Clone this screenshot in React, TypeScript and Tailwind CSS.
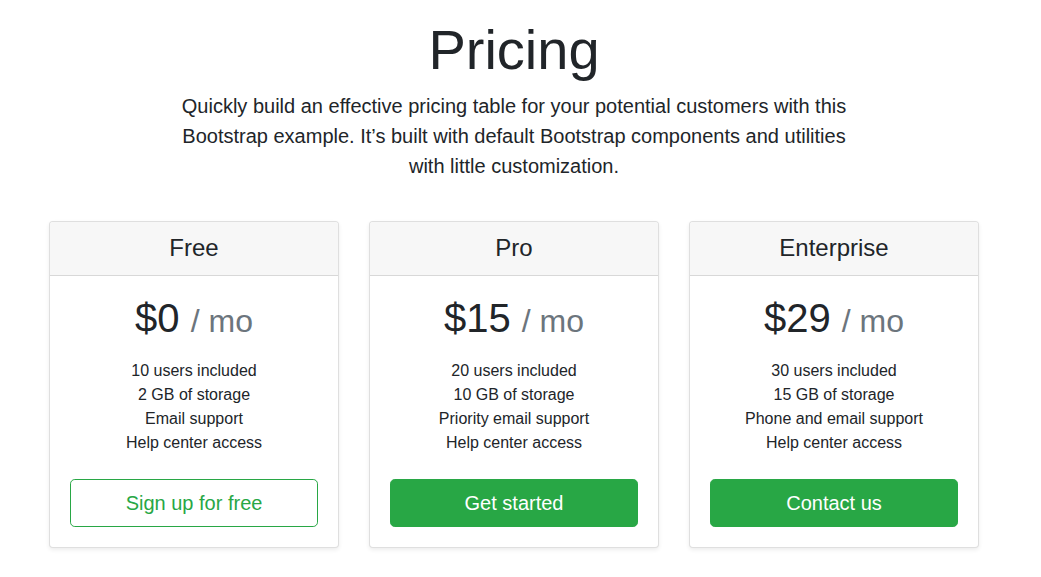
import React from "react";

type Plan = {
  name: string;
  price: string;
  features: string[];
  cta: string;
  outline: boolean;
};

const plans: Plan[] = [
  {
    name: "Free",
    price: "$0",
    features: ["10 users included", "2 GB of storage", "Email support", "Help center access"],
    cta: "Sign up for free",
    outline: true,
  },
  {
    name: "Pro",
    price: "$15",
    features: ["20 users included", "10 GB of storage", "Priority email support", "Help center access"],
    cta: "Get started",
    outline: false,
  },
  {
    name: "Enterprise",
    price: "$29",
    features: ["30 users included", "15 GB of storage", "Phone and email support", "Help center access"],
    cta: "Contact us",
    outline: false,
  },
];

export default function App() {
  return (
    <div
      className="min-h-[577px] w-[1041px] bg-white text-[#212529]"
      style={{ fontFamily: '"Liberation Sans", Arial, sans-serif' }}
    >
      <div className="ml-[49px] w-[930px]">
        <div className="mx-auto w-[700px] px-4 pt-[16px] pb-6 text-center">
          <h1 className="mb-2 text-[56px] leading-[1.2] font-normal">Pricing</h1>
          <p className="mb-4 text-[20px] leading-[30px] font-normal">
            Quickly build an effective pricing table for your potential customers with this Bootstrap example. It’s built with default Bootstrap components and utilities with little customization.
          </p>
        </div>
        <div className="flex gap-[30px] text-center">
          {plans.map((p) => (
            <div
              key={p.name}
              className="flex w-[290px] flex-col rounded-[4px] border border-[rgba(0,0,0,0.125)] bg-white shadow-[0_2px_4px_rgba(0,0,0,0.075)]"
            >
              <div className="rounded-t-[3px] border-b border-[rgba(0,0,0,0.125)] bg-[#f7f7f7] px-5 pt-3 pb-3">
                <h4 className="text-[24px] leading-[1.2] font-normal">{p.name}</h4>
              </div>
              <div className="px-5 pt-[18px] pb-5">
                <h1 className="text-[40px] leading-[48px] font-normal">
                  {p.price} <small className="text-[32px] leading-none text-[#6c757d]">/ mo</small>
                </h1>
                <ul className="mt-[17px] mb-6 text-[16px] leading-[24px]">
                  {p.features.map((f) => (
                    <li key={f}>{f}</li>
                  ))}
                </ul>
                <button
                  className={
                    p.outline
                      ? "block w-full rounded-[4.8px] border border-[#28a745] bg-white px-4 py-2 text-[20px] leading-[30px] text-[#28a745]"
                      : "block w-full rounded-[4.8px] border border-[#28a745] bg-[#28a745] px-4 py-2 text-[20px] leading-[30px] text-white"
                  }
                >
                  {p.cta}
                </button>
              </div>
            </div>
          ))}
        </div>
      </div>
    </div>
  );
}
